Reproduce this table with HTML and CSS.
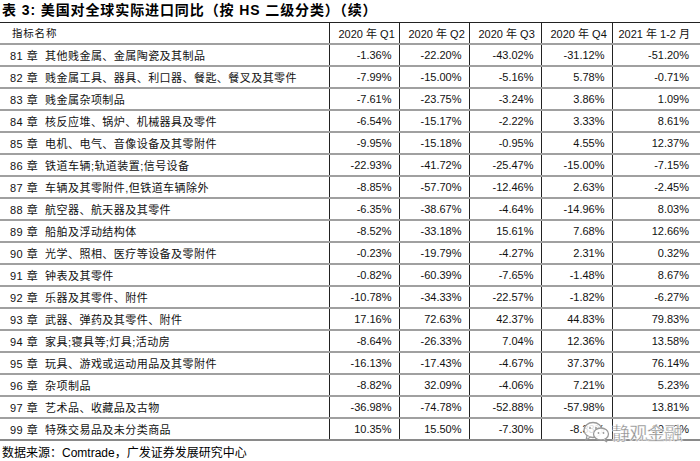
FILE: index.html
```html
<!DOCTYPE html>
<html lang="zh">
<head>
<meta charset="utf-8">
<link rel="stylesheet" href="styles.css">
</head>
<body>
<div class="page">
  <h1 class="title">表 3: 美国对全球实际进口同比（按 HS 二级分类）（续）</h1>
  <table class="data">
    <colgroup>
      <col class="c-name"><col class="c-q"><col class="c-q"><col class="c-q3"><col class="c-q4"><col class="c-last">
    </colgroup>
    <thead>
      <tr><th class="name">指标名称</th><th>2020 年 Q1</th><th>2020 年 Q2</th><th>2020 年 Q3</th><th>2020 年 Q4</th><th class="last">2021 年 1-2 月</th></tr>
    </thead>
    <tbody>
      <tr><td class="name">81 章&nbsp; 其他贱金属、金属陶瓷及其制品</td><td>-1.36%</td><td>-22.20%</td><td>-43.02%</td><td>-31.12%</td><td class="last">-51.20%</td></tr>
      <tr><td class="name">82 章&nbsp; 贱金属工具、器具、利口器、餐匙、餐叉及其零件</td><td>-7.99%</td><td>-15.00%</td><td>-5.16%</td><td>5.78%</td><td class="last">-0.71%</td></tr>
      <tr><td class="name">83 章&nbsp; 贱金属杂项制品</td><td>-7.61%</td><td>-23.75%</td><td>-3.24%</td><td>3.86%</td><td class="last">1.09%</td></tr>
      <tr><td class="name">84 章&nbsp; 核反应堆、锅炉、机械器具及零件</td><td>-6.54%</td><td>-15.17%</td><td>-2.22%</td><td>3.33%</td><td class="last">8.61%</td></tr>
      <tr><td class="name">85 章&nbsp; 电机、电气、音像设备及其零附件</td><td>-9.95%</td><td>-15.18%</td><td>-0.95%</td><td>4.55%</td><td class="last">12.37%</td></tr>
      <tr><td class="name">86 章&nbsp; 铁道车辆;轨道装置;信号设备</td><td>-22.93%</td><td>-41.72%</td><td>-25.47%</td><td>-15.00%</td><td class="last">-7.15%</td></tr>
      <tr><td class="name">87 章&nbsp; 车辆及其零附件,但铁道车辆除外</td><td>-8.85%</td><td>-57.70%</td><td>-12.46%</td><td>2.63%</td><td class="last">-2.45%</td></tr>
      <tr><td class="name">88 章&nbsp; 航空器、航天器及其零件</td><td>-6.35%</td><td>-38.67%</td><td>-4.64%</td><td>-14.96%</td><td class="last">8.03%</td></tr>
      <tr><td class="name">89 章&nbsp; 船舶及浮动结构体</td><td>-8.52%</td><td>-33.18%</td><td>15.61%</td><td>7.68%</td><td class="last">12.66%</td></tr>
      <tr><td class="name">90 章&nbsp; 光学、照相、医疗等设备及零附件</td><td>-0.23%</td><td>-19.79%</td><td>-4.27%</td><td>2.31%</td><td class="last">0.32%</td></tr>
      <tr><td class="name">91 章&nbsp; 钟表及其零件</td><td>-0.82%</td><td>-60.39%</td><td>-7.65%</td><td>-1.48%</td><td class="last">8.67%</td></tr>
      <tr><td class="name">92 章&nbsp; 乐器及其零件、附件</td><td>-10.78%</td><td>-34.33%</td><td>-22.57%</td><td>-1.82%</td><td class="last">-6.27%</td></tr>
      <tr><td class="name">93 章&nbsp; 武器、弹药及其零件、附件</td><td>17.16%</td><td>72.63%</td><td>42.37%</td><td>44.83%</td><td class="last">79.83%</td></tr>
      <tr><td class="name">94 章&nbsp; 家具;寝具等;灯具;活动房</td><td>-8.64%</td><td>-26.33%</td><td>7.04%</td><td>12.36%</td><td class="last">13.58%</td></tr>
      <tr><td class="name">95 章&nbsp; 玩具、游戏或运动用品及其零附件</td><td>-16.13%</td><td>-17.43%</td><td>-4.67%</td><td>37.37%</td><td class="last">76.14%</td></tr>
      <tr><td class="name">96 章&nbsp; 杂项制品</td><td>-8.82%</td><td>32.09%</td><td>-4.06%</td><td>7.21%</td><td class="last">5.23%</td></tr>
      <tr><td class="name">97 章&nbsp; 艺术品、收藏品及古物</td><td>-36.98%</td><td>-74.78%</td><td>-52.88%</td><td>-57.98%</td><td class="last">13.81%</td></tr>
      <tr><td class="name">99 章&nbsp; 特殊交易品及未分类商品</td><td>10.35%</td><td>15.50%</td><td>-7.30%</td><td>-8.33%</td><td class="last">10.03%</td></tr>
    </tbody>
  </table>
  <p class="source">数据来源：Comtrade，广发证券发展研究中心</p>
  <div class="watermark">
    <svg class="wm-icon" width="28" height="22" viewBox="0 0 28 22" aria-hidden="true">
      <ellipse cx="10" cy="9" rx="9" ry="7.5" fill="rgba(255,255,255,0.85)" stroke="#9a9a9a" stroke-width="1.3"/>
      <path d="M4 15 L3 19 L7.5 16" fill="rgba(255,255,255,0.85)" stroke="#9a9a9a" stroke-width="1.2"/>
      <ellipse cx="18" cy="13" rx="7.5" ry="6" fill="rgba(255,255,255,0.9)" stroke="#9a9a9a" stroke-width="1.3"/>
      <path d="M22 18 L24 21 L20 18.6" fill="rgba(255,255,255,0.9)" stroke="#9a9a9a" stroke-width="1.2"/>
      <circle cx="7" cy="7" r="1" fill="#9a9a9a"/>
      <circle cx="13" cy="7" r="1" fill="#9a9a9a"/>
      <circle cx="15.5" cy="12" r="0.9" fill="#9a9a9a"/>
      <circle cx="20.5" cy="12" r="0.9" fill="#9a9a9a"/>
    </svg>
    <span class="wm-text">静观金融</span>
  </div>
</div>
</body>
</html>
```

FILE: styles.css
```css
* { box-sizing: border-box; }
html, body { margin: 0; padding: 0; background: #fff; }
body {
  font-family: "Liberation Sans", "Noto Sans CJK SC", sans-serif;
  color: #000;
  width: 700px;
  height: 461px;
  overflow: hidden;
}
.page { position: relative; width: 700px; }
.title {
  margin: 0;
  padding-left: 2px;
  height: 22px;
  line-height: 21px;
  font-size: 14px;
  font-weight: bold;
  letter-spacing: 0.9px;
}
.data {
  width: 700px;
  border-collapse: collapse;
  table-layout: fixed;
  font-size: 11px;
  border-top: 1px solid #222;
}
.c-name { width: 329px; }
.c-q { width: 70px; }
.c-q3 { width: 72px; }
.c-q4 { width: 71px; }
.c-last { width: 88px; }
.data th, .data td {
  height: 22px;
  padding: 0 7px 0 0;
  border-left: 1px solid #222;
  border-bottom: 2px solid #a0a0a0;
  text-align: right;
  white-space: nowrap;
  font-weight: normal;
  vertical-align: middle;
  color: #111;
}
.data td.last { padding-right: 11px; }
.data thead th {
  height: 21px;
  text-align: left;
  padding: 0 0 0 9px;
}
.data thead th.last { padding-left: 6px; }
.data th.name, .data td.name {
  border-left: none;
  text-align: left;
  padding-left: 10px;
  letter-spacing: 0.45px;
}
.data thead th.name { padding-left: 12px; font-size: 10.5px; letter-spacing: 0.8px; }
.data tbody tr:last-child td { border-bottom: 2px solid #8a8a8a; }
.source {
  margin: 0;
  padding-left: 2px;
  height: 21px;
  line-height: 24px;
  font-size: 12px;
}
.watermark {
  position: absolute;
  left: 583px;
  top: 421px;
  display: flex;
  align-items: center;
  gap: 1px;
}
.wm-text {
  font-family: "Noto Sans CJK SC", sans-serif;
  font-size: 18px;
  line-height: 20px;
  color: #8c8c8c;
  -webkit-text-stroke: 0.3px #fff;
  text-shadow: 0 0 2px #fff, 0 0 2px #fff;
  letter-spacing: -0.5px;
}
```
